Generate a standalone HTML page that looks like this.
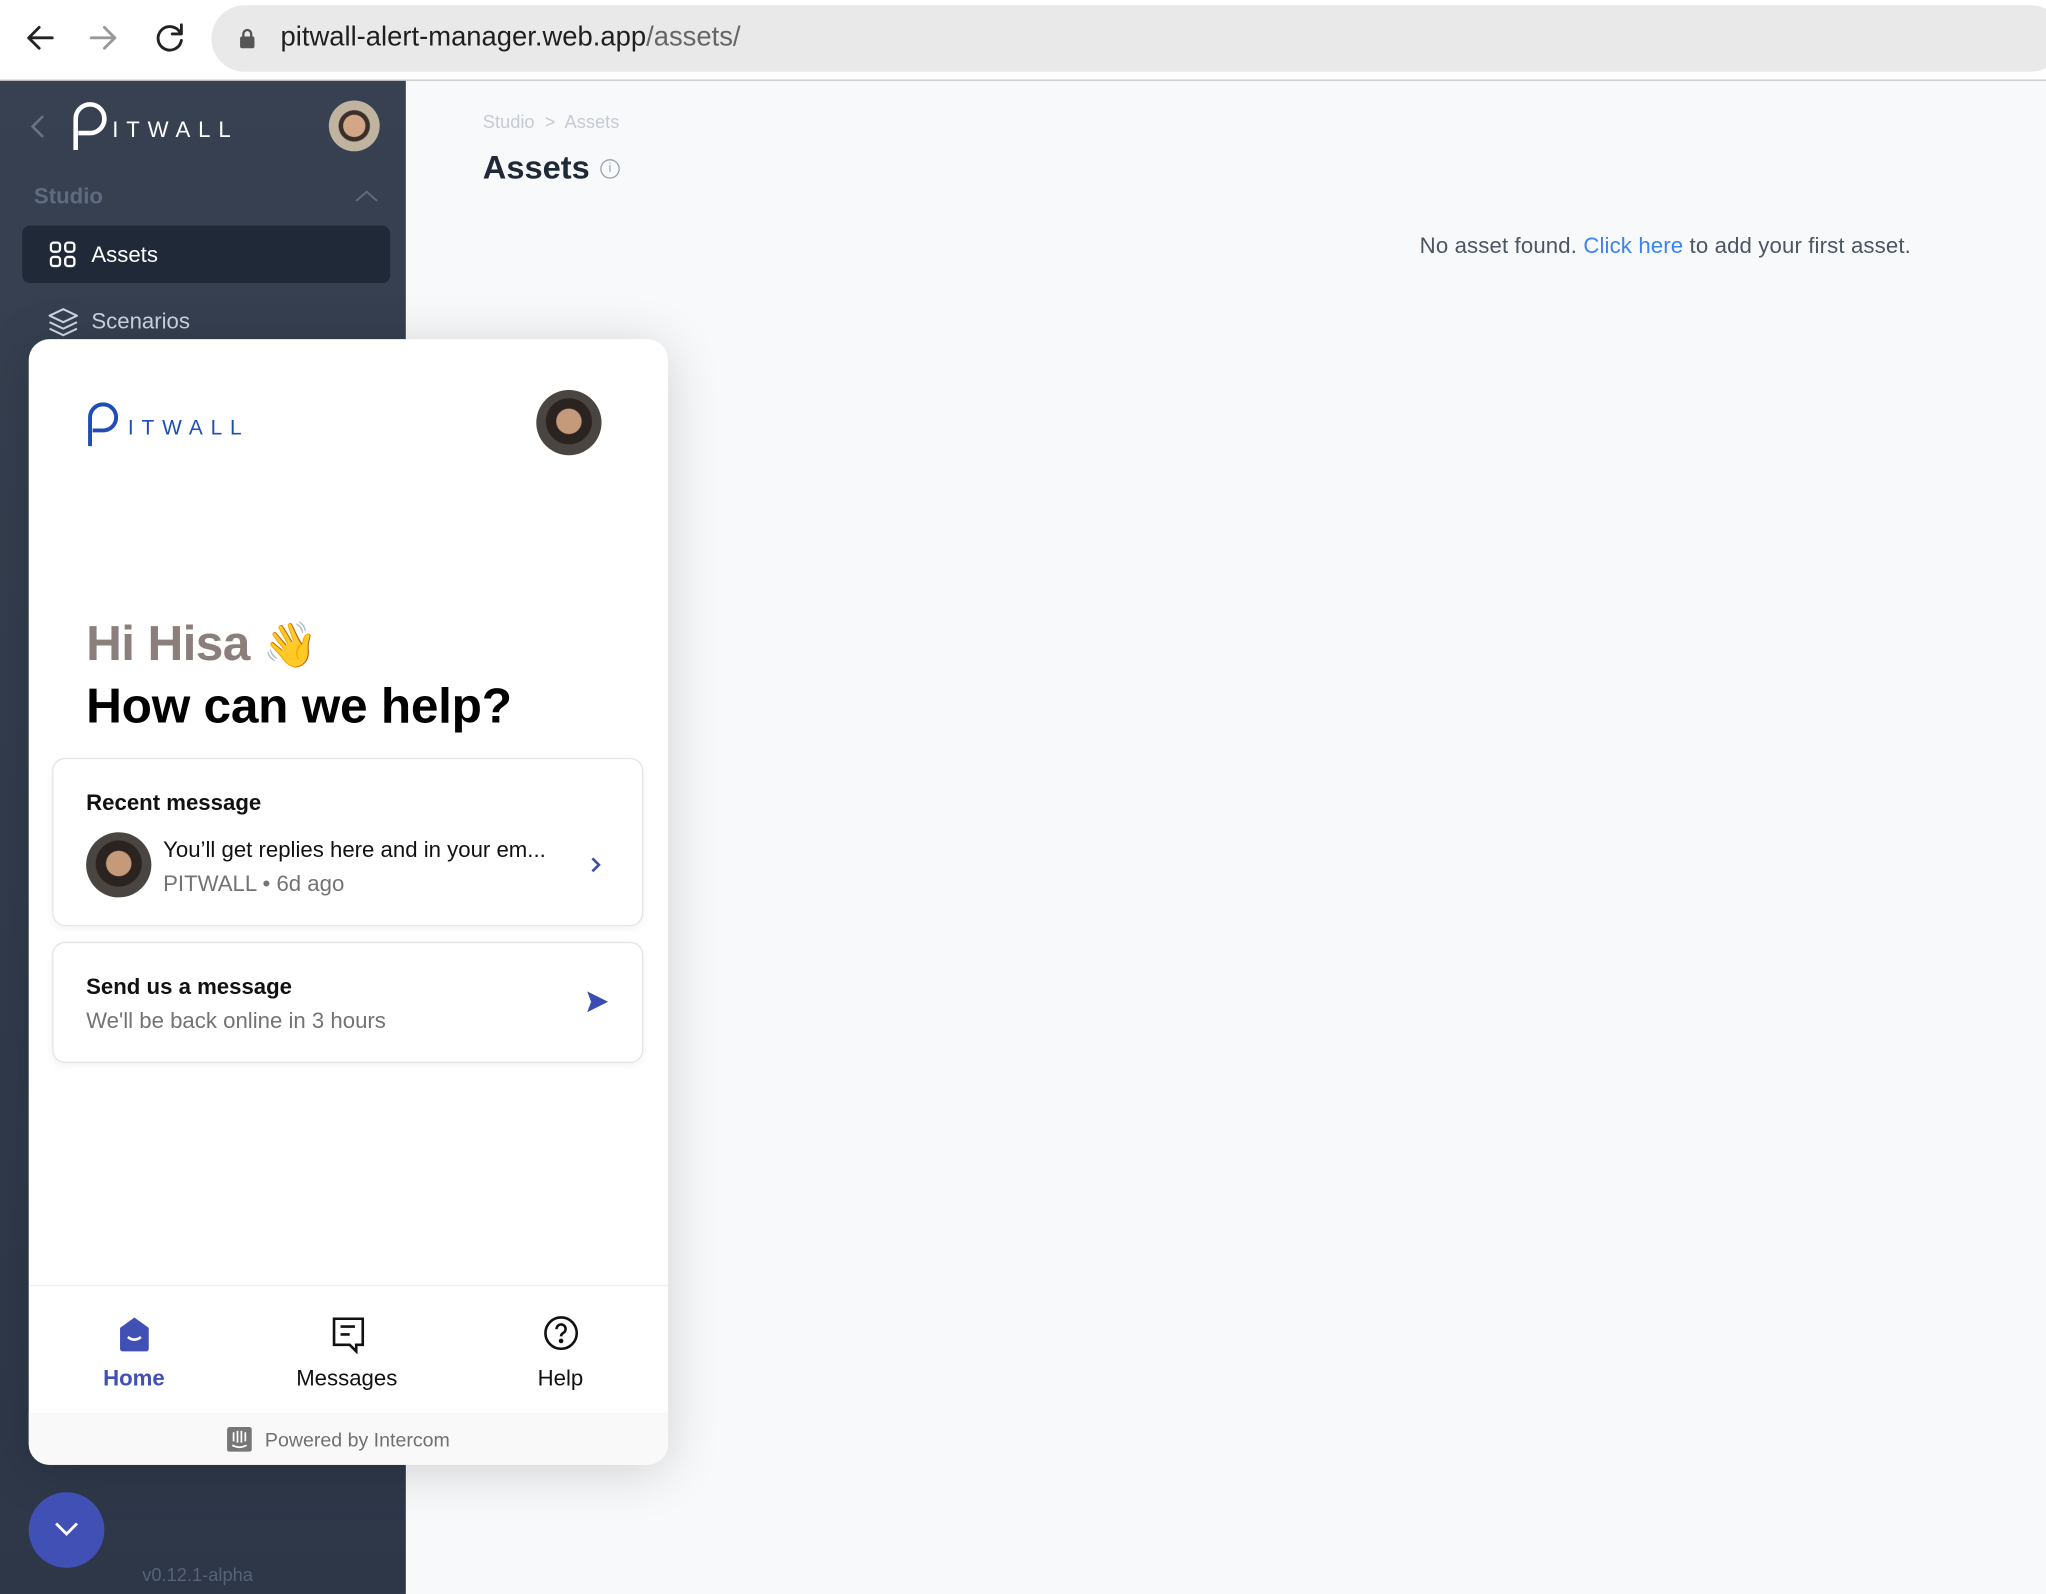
<!DOCTYPE html>
<html><head><meta charset="utf-8"><style>
*{margin:0;padding:0;box-sizing:border-box}
html,body{width:2046px;height:1594px;overflow:hidden;background:#f8f9fb;font-family:"Liberation Sans",sans-serif}
#w{position:absolute;left:0;top:0;width:1568px;height:1222px;transform:scale(1.30485,1.3044);transform-origin:0 0}
.abs{position:absolute}
</style></head><body><div id="w">
<div class="abs" style="left:0;top:0;width:1568px;height:62px;background:#fff;border-bottom:1px solid #c8c8c8"></div>
<svg class="abs" style="left:18px;top:16px" width="130" height="26" viewBox="0 0 130 26" fill="none" stroke-width="2.2" stroke-linecap="round" stroke-linejoin="round">
<path d="M22 13H4M12 5L4 13l8 8" stroke="#222"/>
<path d="M52 13h18M62 5l8 8-8 8" stroke="#999"/>
<path d="M120 9a9 9 0 1 0 1 6" stroke="#222"/><path d="M121 3v7h-7" stroke="#222"/>
</svg>
<div class="abs" style="left:162px;top:4px;width:1420px;height:51px;background:#e9e9e9;border-radius:26px"></div>
<svg class="abs" style="left:183px;top:21px" width="13" height="17" viewBox="0 0 13 17"><rect x="1" y="7" width="11" height="9" rx="1.5" fill="#555"/><path d="M3.5 7V5a3 3 0 0 1 6 0v2" stroke="#555" stroke-width="1.8" fill="none"/></svg>
<div class="abs" style="left:215px;top:17px;font-size:21px;color:#1f1f1f">pitwall-alert-manager.web.app<span style="color:#666">/assets/</span></div>
<div class="abs" style="left:0;top:62px;width:311px;height:1160px;background:linear-gradient(#374151,#2d3748)"></div>
<svg class="abs" style="left:22px;top:87px" width="14" height="20" viewBox="0 0 14 20"><path d="M11 2L3 10l8 8" stroke="#6b7280" stroke-width="2" fill="none"/></svg>
<svg class="abs" style="left:54px;top:77px" width="32" height="40" viewBox="0 0 32 40"><path d="M4 38V14a11 11 0 0 1 22 0v0a11 11 0 0 1-11 11H6" stroke="#fff" stroke-width="3.5" fill="none"/></svg>
<div class="abs" style="left:86px;top:90px;font-size:17px;letter-spacing:6px;color:#fff">ITWALL</div>
<div class="abs" style="left:252px;top:77px;width:39px;height:39px;border-radius:50%;background:radial-gradient(circle at 50% 50%,#d4a688 0 30%,#3a2f2a 32% 42%,#c0b4a0 45%)"></div>
<div class="abs" style="left:26px;top:141px;font-size:17px;font-weight:bold;color:#5e6b80">Studio</div>
<svg class="abs" style="left:272px;top:145px" width="18" height="10" viewBox="0 0 18 10"><path d="M1 9l8-7 8 7" stroke="#5e6b80" stroke-width="1.5" fill="none"/></svg>
<div class="abs" style="left:17px;top:173px;width:282px;height:44px;background:#1f2937;border-radius:6px"></div>
<svg class="abs" style="left:38px;top:185px" width="20" height="20" viewBox="0 0 20 20" fill="none" stroke="#fff" stroke-width="1.8"><rect x="1" y="1" width="7" height="7" rx="2.2"/><rect x="12" y="1" width="7" height="7" rx="2.2"/><rect x="1" y="12" width="7" height="7" rx="2.2"/><rect x="12" y="12" width="7" height="7" rx="2.2"/></svg>
<div class="abs" style="left:70px;top:186px;font-size:17px;color:#fff">Assets</div>
<svg class="abs" style="left:37px;top:236px" width="23" height="22" viewBox="0 0 23 22" fill="none" stroke="#cbd5e1" stroke-width="1.6" stroke-linejoin="round"><path d="M11.5 1L22 6l-10.5 5L1 6z"/><path d="M1 11l10.5 5L22 11"/><path d="M1 16l10.5 5L22 16"/></svg>
<div class="abs" style="left:70px;top:237px;font-size:17px;color:#cbd5e1">Scenarios</div>
<div class="abs" style="left:109px;top:1199px;font-size:14px;color:#56627a">v0.12.1-alpha</div>
<div class="abs" style="left:370px;top:85px;font-size:14px;color:#c5cad3">Studio &nbsp;&gt;&nbsp; Assets</div>
<div class="abs" style="left:370px;top:115px;font-size:25px;font-weight:bold;color:#1f2937">Assets</div>
<div class="abs" style="left:460px;top:122px;width:15px;height:15px;border:1px solid #9ca3af;border-radius:50%;font-size:10px;color:#9ca3af;text-align:center;line-height:13px">i</div>
<div class="abs" style="left:1088px;top:179px;font-size:17px;color:#4b5563;letter-spacing:0.1px">No asset found. <span style="color:#3b82f6">Click here</span> to add your first asset.</div>
<div class="abs" style="left:22px;top:260px;width:490px;height:863px;background:#fff;border-radius:16px;box-shadow:0 5px 40px rgba(0,0,0,.16);overflow:hidden">
 <svg class="abs" style="left:44px;top:47px" width="30" height="37" viewBox="0 0 30 37"><path d="M3 35V13a10 10 0 0 1 20 0a10 10 0 0 1-10 10H5" stroke="#1e4db7" stroke-width="3" fill="none"/></svg>
 <div class="abs" style="left:76px;top:60px;font-size:16px;letter-spacing:6px;color:#1e4db7">ITWALL</div>
 <div class="abs" style="left:389px;top:39px;width:50px;height:50px;border-radius:50%;background:radial-gradient(circle at 50% 48%,#c59a7a 0 26%,#2a2320 28% 48%,#4a4540 50%)"></div>
 <div class="abs" style="left:44px;top:213px;font-size:38px;font-weight:bold;color:#8b7f7c;letter-spacing:-0.5px">Hi Hisa <span style="font-size:34px">👋</span></div>
 <div class="abs" style="left:44px;top:261px;font-size:38px;font-weight:bold;color:#000;letter-spacing:-0.2px">How can we help?</div>
 <div class="abs" style="left:18px;top:321px;width:453px;height:129px;border:1px solid #e5e5e5;border-radius:10px;box-shadow:0 2px 6px rgba(0,0,0,.05)">
  <div class="abs" style="left:25px;top:24px;font-size:17px;font-weight:bold;color:#111">Recent message</div>
  <div class="abs" style="left:25px;top:56px;width:50px;height:50px;border-radius:50%;background:radial-gradient(circle at 50% 48%,#c59a7a 0 26%,#2a2320 28% 48%,#4a4540 50%)"></div>
  <div class="abs" style="left:84px;top:60px;font-size:17px;color:#111">You’ll get replies here and in your em...</div>
  <div class="abs" style="left:84px;top:86px;font-size:17px;color:#737373">PITWALL • 6d ago</div>
  <svg class="abs" style="left:411px;top:74px" width="10" height="14" viewBox="0 0 10 14"><path d="M2 2l5 5-5 5" stroke="#3b4db0" stroke-width="2" fill="none"/></svg>
 </div>
 <div class="abs" style="left:18px;top:462px;width:453px;height:93px;border:1px solid #e5e5e5;border-radius:10px;box-shadow:0 2px 6px rgba(0,0,0,.05)">
  <div class="abs" style="left:25px;top:24px;font-size:17px;font-weight:bold;color:#111">Send us a message</div>
  <div class="abs" style="left:25px;top:50px;font-size:17px;color:#737373">We'll be back online in 3 hours</div>
  <svg class="abs" style="left:408px;top:36px" width="18" height="18" viewBox="0 0 18 18"><path d="M1 1l16 8-16 8 3-8z" fill="#3b4db0"/></svg>
 </div>
 <div class="abs" style="left:0;top:725px;width:490px;height:98px;border-top:1px solid #f0f0f0"></div>
 <svg class="abs" style="left:68px;top:748px" width="26" height="30" viewBox="0 0 26 30"><path d="M2 10L13 2l11 8v16a2 2 0 0 1-2 2H4a2 2 0 0 1-2-2z" fill="#4150b5"/><path d="M8 17q5 4 10 0" stroke="#fff" stroke-width="2" fill="none"/></svg>
 <div class="abs" style="left:57px;top:787px;font-size:17px;font-weight:bold;color:#4150b5">Home</div>
 <svg class="abs" style="left:232px;top:748px" width="26" height="30" viewBox="0 0 26 30" fill="none" stroke="#111" stroke-width="2"><path d="M2 3h22v20h-5v5l-5-5H2z"/><path d="M7 9h11M7 15h7"/></svg>
 <div class="abs" style="left:205px;top:787px;font-size:17px;color:#111">Messages</div>
 <svg class="abs" style="left:394px;top:748px" width="28" height="28" viewBox="0 0 28 28" fill="none" stroke="#111" stroke-width="2"><circle cx="14" cy="14" r="12"/><path d="M10.5 11a3.5 3.5 0 1 1 5 3c-1 .6-1.5 1.3-1.5 2.5"/><circle cx="14" cy="20" r=".8" fill="#111"/></svg>
 <div class="abs" style="left:390px;top:787px;font-size:17px;color:#111">Help</div>
 <div class="abs" style="left:0;top:823px;width:490px;height:40px;background:#f9f9f9"></div>
 <svg class="abs" style="left:152px;top:834px" width="19" height="19" viewBox="0 0 19 19"><rect width="19" height="19" rx="2" fill="#777"/><path d="M5 4v7M8 3v9M11 3v9M14 4v7M4 14q5.5 3 11 0" stroke="#fff" stroke-width="1.3" fill="none"/></svg>
 <div class="abs" style="left:181px;top:836px;font-size:15px;color:#707070">Powered by Intercom</div>
</div>
<div class="abs" style="left:22px;top:1144px;width:58px;height:58px;border-radius:50%;background:#4150b5"></div>
<svg class="abs" style="left:41px;top:1166px" width="20" height="12" viewBox="0 0 20 12"><path d="M2 2l8 8 8-8" stroke="#fff" stroke-width="2.2" fill="none"/></svg>
</div></body></html>
